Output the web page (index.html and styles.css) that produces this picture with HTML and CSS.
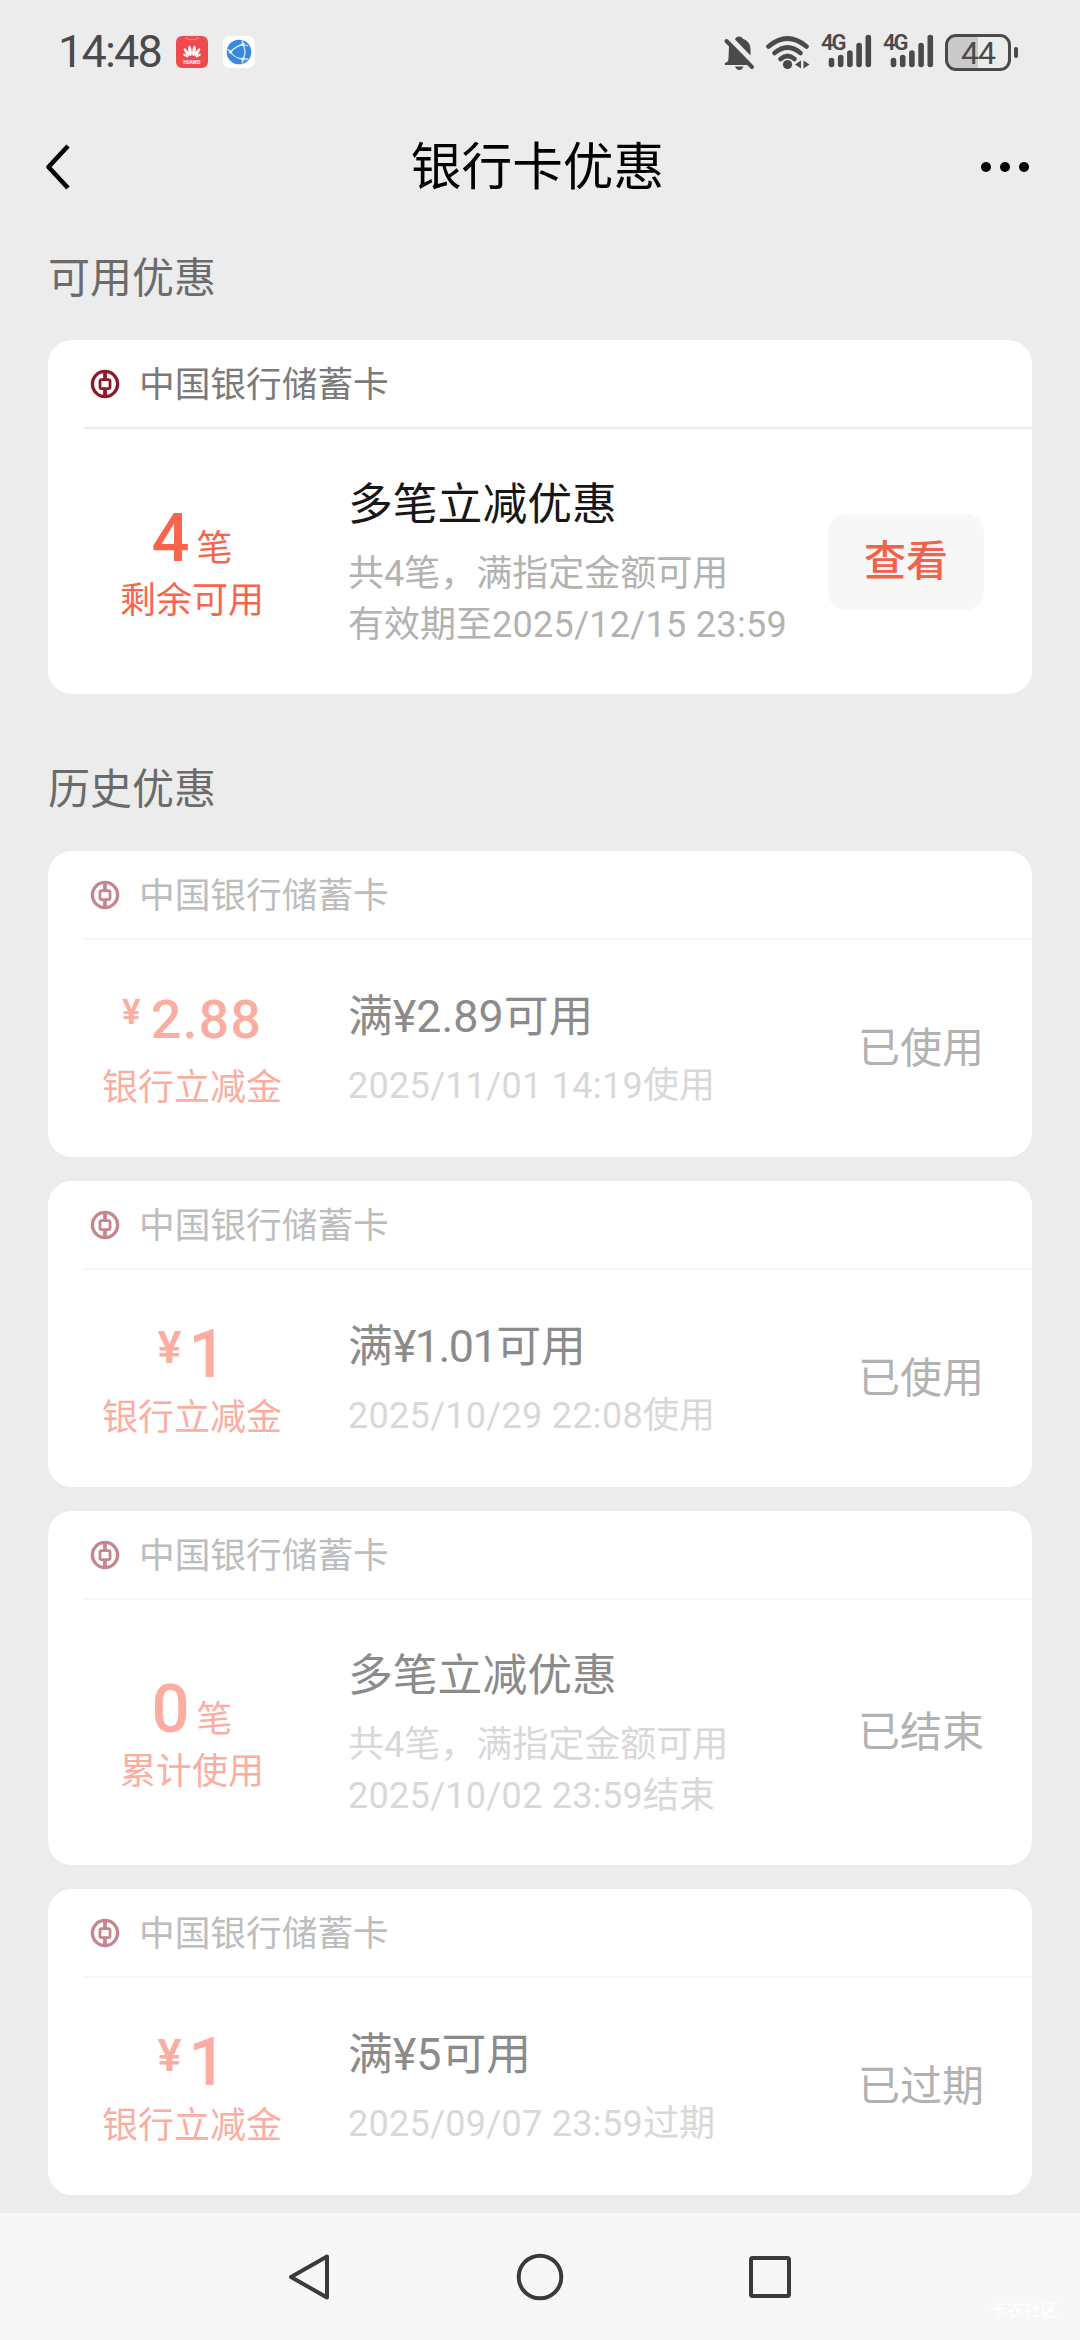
FILE: index.html
```html
<!DOCTYPE html>
<html lang="zh-CN">
<head>
<meta charset="utf-8">
<title>银行卡优惠</title>
<link rel="stylesheet" href="styles.css">
</head>
<body>
<svg class="defs" width="0" height="0">
  <symbol id="boc" viewBox="0 0 30 30">
    <circle cx="15" cy="15" r="12.6" fill="none" stroke="#8f1a2a" stroke-width="3.4"/>
    <path d="M15 2v9M15 20v9" stroke="#8f1a2a" stroke-width="3.8"/>
    <rect x="10" y="10.6" width="10" height="9" rx="1.5" fill="none" stroke="#8f1a2a" stroke-width="2.8"/>
  </symbol>
  <symbol id="bars" viewBox="0 0 52 36">
    <path d="M10.500 26.500V30.500M19.700 23.500V30.500M28.900 19V30.500M38.100 11.500V30.500M47.300 3.500V30.500" stroke="#4a4a4a" stroke-width="5.600" stroke-linecap="round"/>
  </symbol>
</svg>

<header class="status">
  <div class="status-left">
    <span class="clock">14:48</span>
    <svg class="app" width="32" height="32" viewBox="0 0 32 32">
      <rect width="32" height="32" rx="6" fill="#ee4a50"/>
      <path d="M9 1.500Q16 6 23 1.500" fill="none" stroke="#f79a9c" stroke-width="1"/>
      <g fill="#fff">
        <ellipse cx="14" cy="14.800" rx="1.700" ry="5.200" transform="rotate(-8 14 14.800)"/>
        <ellipse cx="18" cy="14.800" rx="1.700" ry="5.200" transform="rotate(8 18 14.800)"/>
        <ellipse cx="10.600" cy="16.200" rx="1.500" ry="4.600" transform="rotate(-32 10.600 16.200)"/>
        <ellipse cx="21.400" cy="16.200" rx="1.500" ry="4.600" transform="rotate(32 21.400 16.200)"/>
        <ellipse cx="9.800" cy="19.600" rx="1.100" ry="3" transform="rotate(-62 9.800 19.600)"/>
        <ellipse cx="22.200" cy="19.600" rx="1.100" ry="3" transform="rotate(62 22.200 19.600)"/>
      </g>
      <text x="16" y="27.500" class="app-word">HUAWEI</text>
    </svg>
    <svg class="app" width="32" height="32" viewBox="0 0 32 32">
      <rect width="32" height="32" rx="7" fill="#fff"/>
      <circle cx="16" cy="16" r="12.300" fill="#3a86e0"/>
      <path d="M7.500 16Q13 10 20 8.500M7.500 16Q12 22.500 20 23M20 8.500Q24 16 20 23M20 8.500L19 4.500M20 8.500L25 10M20 23L19 27.500M20 23L25 23M7.500 16L4.500 13" fill="none" stroke="#c8f0ff" stroke-width="1.300"/>
      <circle cx="7.500" cy="16" r="1.800" fill="#e4faff"/><circle cx="20" cy="8.500" r="1.800" fill="#e4faff"/><circle cx="20" cy="23" r="1.800" fill="#e4faff"/>
    </svg>
  </div>
  <div class="status-right">
    <svg class="bell" width="32" height="36" viewBox="0 0 32 36">
      <path d="M12 5.500Q13 2.500 16 2.500Q19 2.500 19.500 4.500Q27.500 7.500 27.500 15.500V21.500Z" fill="#4a4a4a"/>
      <path d="M6 12L25 31H2Q1 29 4 28Q5.500 27 5.500 24Z" fill="#4a4a4a"/>
      <path d="M3.500 7L29 33" stroke="#4a4a4a" stroke-width="4" stroke-linecap="round"/>
      <path d="M12 32.500H20.500Q19 36 16.200 36Q13.500 36 12 32.500Z" fill="#4a4a4a"/>
    </svg>
    <svg class="wifi" width="46" height="36" viewBox="0 0 46 36">
      <g fill="none" stroke="#4a4a4a" stroke-width="4.600" stroke-linecap="round">
        <path d="M3.500 12.500Q22.500-3.500 41.500 12.500"/>
        <path d="M9.500 19Q22.500 8 35.500 19"/>
        <path d="M15.500 25Q22.500 19 29.500 25"/>
      </g>
      <circle cx="22.500" cy="30.500" r="4.600" fill="#4a4a4a"/>
      <path d="M36 26.500V34.500L30 30.500ZM38.500 26.500V34.500L44.500 30.500Z" fill="#4a4a4a"/>
    </svg>
    <div class="signal"><span>4G</span><svg width="52" height="36"><use href="#bars"/></svg></div>
    <div class="signal"><span>4G</span><svg width="52" height="36"><use href="#bars"/></svg></div>
    <div class="battery"><span class="battery-body">44</span><span class="battery-tip"></span></div>
  </div>
</header>

<nav class="titlebar">
  <svg width="28" height="52" viewBox="0 0 28 52"><path d="M25 5L5.500 26L25 47" fill="none" stroke="#000" stroke-width="4.600" stroke-linejoin="round"/></svg>
  <h1>银行卡优惠</h1>
  <svg width="50" height="12" viewBox="0 0 50 12"><circle cx="6" cy="6" r="5"/><circle cx="25" cy="6" r="5"/><circle cx="44" cy="6" r="5"/></svg>
</nav>

<main>
  <h2>可用优惠</h2>
  <section class="card">
    <div class="bank"><svg><use href="#boc"/></svg><span>中国银行储蓄卡</span></div>
    <div class="body">
      <div class="value">
        <div class="amount"><b>4</b><span>笔</span></div>
        <div class="label">剩余可用</div>
      </div>
      <div class="info">
        <h3>多笔立减优惠</h3>
        <p>共4笔，满指定金额可用<br>有效期至<time>2025/12/15 23:59</time></p>
      </div>
      <button class="view">查看</button>
    </div>
  </section>

  <h2 class="history">历史优惠</h2>
  <div class="list">
    <section class="card short used">
      <div class="bank"><svg><use href="#boc"/></svg><span>中国银行储蓄卡</span></div>
      <div class="body">
        <div class="value">
          <div class="amount money small"><i>¥</i><b>2.88</b></div>
          <div class="label">银行立减金</div>
        </div>
        <div class="info">
          <h3>满¥2.89可用</h3>
          <p><time>2025/11/01 14:19</time>使用</p>
        </div>
        <div class="state">已使用</div>
      </div>
    </section>
    <section class="card short used">
      <div class="bank"><svg><use href="#boc"/></svg><span>中国银行储蓄卡</span></div>
      <div class="body">
        <div class="value">
          <div class="amount money"><i>¥</i><b>1</b></div>
          <div class="label">银行立减金</div>
        </div>
        <div class="info">
          <h3>满<span class="tight">¥1.01</span>可用</h3>
          <p><time>2025/10/29 22:08</time>使用</p>
        </div>
        <div class="state">已使用</div>
      </div>
    </section>
    <section class="card used">
      <div class="bank"><svg><use href="#boc"/></svg><span>中国银行储蓄卡</span></div>
      <div class="body">
        <div class="value">
          <div class="amount"><b>0</b><span>笔</span></div>
          <div class="label">累计使用</div>
        </div>
        <div class="info">
          <h3>多笔立减优惠</h3>
          <p>共4笔，满指定金额可用<br><time>2025/10/02 23:59</time>结束</p>
        </div>
        <div class="state">已结束</div>
      </div>
    </section>
    <section class="card short used">
      <div class="bank"><svg><use href="#boc"/></svg><span>中国银行储蓄卡</span></div>
      <div class="body">
        <div class="value">
          <div class="amount money"><i>¥</i><b>1</b></div>
          <div class="label">银行立减金</div>
        </div>
        <div class="info">
          <h3>满¥5可用</h3>
          <p><time>2025/09/07 23:59</time>过期</p>
        </div>
        <div class="state">已过期</div>
      </div>
    </section>
  </div>
</main>

<footer class="sysnav">
  <svg width="48" height="50" viewBox="0 0 48 50"><path d="M41 4.500V45.500L5 25Z" fill="none" stroke="#3a3a3a" stroke-width="4" stroke-linejoin="round"/></svg>
  <svg width="50" height="50" viewBox="0 0 50 50"><circle cx="25" cy="25" r="21.300" fill="none" stroke="#3a3a3a" stroke-width="4"/></svg>
  <svg width="48" height="50" viewBox="0 0 48 50"><rect x="5" y="6" width="38" height="38" rx="1.500" fill="none" stroke="#3a3a3a" stroke-width="4"/></svg>
  <span class="mark">卡农社区</span>
</footer>
</body>
</html>
```
FILE: styles.css
```css
* { box-sizing: border-box; margin: 0; padding: 0; }
body {
  width: 1080px;
  height: 2340px;
  overflow: hidden;
  display: flex;
  flex-direction: column;
  background: #ececec;
  font-family: Roboto, "Noto Sans CJK SC", sans-serif;
  font-weight: 400;
}
svg { display: block; flex: none; }
.defs { position: absolute; }
h1, h2, h3, i { font-weight: 400; font-style: normal; }

.status {
  height: 104px;
  padding: 0 62px 0 58px;
  display: flex;
  justify-content: space-between;
  align-items: center;
  color: #4a4a4a;
}
.status-left, .status-right { display: flex; align-items: center; }
.clock { width: 118px; font-size: 45px; font-weight: 400; letter-spacing: -1.800px; line-height: 60px; }
.app { margin-right: 15px; }
.app-word { font: 700 4.500px Roboto, sans-serif; fill: #fff; text-anchor: middle; }
.bell { margin-right: 10px; }
.wifi { margin-right: 10px; }
.signal { display: flex; width: 62px; }
.signal span { width: 0; height: 16px; white-space: nowrap; font-size: 22px; font-weight: 600; line-height: 18px; letter-spacing: -2px; }
.battery { display: flex; align-items: center; gap: 3px; }
.battery-body {
  width: 66px;
  height: 37px;
  border: 3px solid #4a4a4a;
  border-radius: 11px;
  background: linear-gradient(90deg, #cacaca 50%, transparent 50%);
  font-size: 32px;
  line-height: 32px;
  letter-spacing: -1px;
  text-align: center;
}
.battery-tip { width: 4px; height: 11px; border-radius: 2px; background: #4a4a4a; }

.titlebar {
  height: 126px;
  padding: 0 50px 0 43px;
  display: flex;
  justify-content: space-between;
  align-items: center;
}
.titlebar h1 { font-size: 50.700px; line-height: 70px; margin: 2px 0 0 24px; }

main { flex: 1; padding: 0 48px; }
h2 { height: 110px; padding-top: 18px; font-size: 42px; line-height: 62px; color: #6b6b6b; }
h2.history { height: 157px; padding-top: 65px; }
.list { display: flex; flex-direction: column; gap: 24px; }

.card { height: 354px; display: flex; flex-direction: column; border-radius: 24px; background: #fff; }
.card.short { height: 306px; }
.bank {
  height: 89px;
  margin-left: 36px;
  border-bottom: 2px solid #ebebeb;
  display: flex;
  align-items: center;
  gap: 19px;
  font-size: 35.700px;
  line-height: 50px;
  color: #7a7a7a;
}
.bank span { margin-top: 3px; }
.bank svg { width: 30px; height: 30px; margin-left: 6px; }
.body { flex: 1; display: flex; align-items: center; padding-right: 48px; }
.value { width: 288px; display: flex; flex-direction: column; align-items: center; color: #f9644c; }
.amount { height: 78px; display: flex; align-items: baseline; gap: 7px; line-height: 80px; font-size: 36px; }
.amount b { font-size: 67px; font-weight: 500; }
.small b { font-size: 54px; letter-spacing: 1px; }
.amount.small b { font-size: 54px; }
.amount.money { align-items: flex-start; line-height: 78px; }
.money i { margin-top: -6px; font-size: 45px; font-weight: 600; }
.small i { margin-top: -7px; font-size: 35px; }
.amount.small { line-height: 70px; gap: 10px; }
.label { height: 50px; font-size: 36px; line-height: 50px; }
.info { flex: 1; margin-left: 12px; white-space: nowrap; }
.info h3 { font-size: 44.800px; line-height: 63px; color: #171717; }
.info p { margin-top: 13px; font-size: 36px; line-height: 51px; color: #b2b2b2; }
.info time { letter-spacing: .3px; }
.tight { letter-spacing: -1.500px; }
.view {
  width: 156px;
  height: 96px;
  border: 0;
  border-radius: 18px;
  background: #f7f7f7;
  color: #f4604a;
  font: 500 42px/90px Roboto, "Noto Sans CJK SC", sans-serif;
}
.state { font-size: 42px; line-height: 60px; color: #b2b2b2; }
.used .bank { border-color: #f6f6f6; color: #bdbdbd; }
.used .bank svg, .used .value { opacity: .52; }
.used h3 { color: #8b8b8b; }
.used p { color: #d8d8d8; }

.sysnav {
  height: 127px;
  display: flex;
  justify-content: center;
  align-items: center;
  gap: 181px;
  background: #f7f7f7;
  position: relative;
}
.mark { position: absolute; right: 22px; bottom: 18px; font-size: 17px; line-height: 24px; color: #fff; }
```
